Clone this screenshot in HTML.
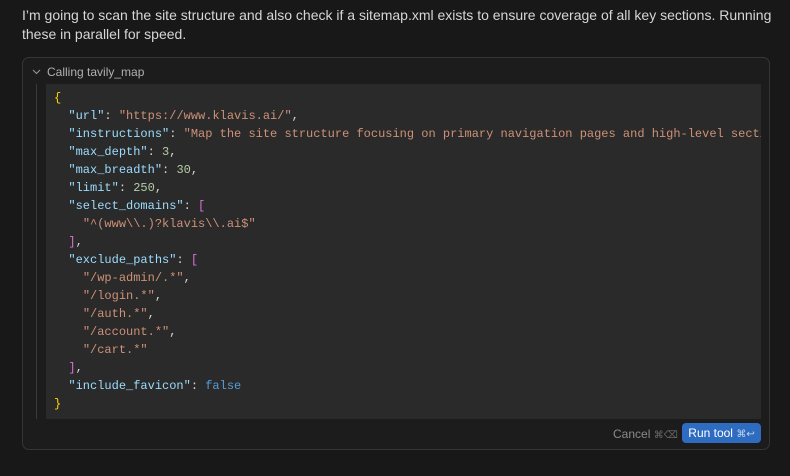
<!DOCTYPE html>
<html><head><style>
body{margin:0;background:#181818;width:790px;height:476px;overflow:hidden;font-family:"Liberation Sans",sans-serif;color:#d4d4d4}
.p{position:absolute;left:22px;top:6px;width:764px;font-size:14px;line-height:19px;color:#d6d6d6}
.box{position:absolute;left:22px;top:57px;width:746px;height:391px;border:1px solid #363636;border-radius:7px;background:#1c1c1c}
.hd{position:absolute;left:24px;top:7px;font-size:12px;color:#b0b0b0}
.chev{position:absolute;left:9px;top:11px}
.vl{position:absolute;left:13px;top:26px;width:1px;height:335px;background:#3a3a3a}
.code{position:absolute;left:23px;top:26px;width:715px;height:335px;background:#2a2a2a;overflow:hidden}
pre{margin:0;position:absolute;left:8px;top:5px;font-family:"Liberation Mono",monospace;font-size:12px;line-height:18px;color:#d4d4d4;white-space:pre}
.k{color:#9cdcfe}.s{color:#ce9178}.n{color:#b5cea8}.b{color:#ffd700}.v{color:#da70d6}.f{color:#569cd6}
.cancel{position:absolute;left:590px;top:369px;font-size:12px;color:#8a8a8a}
.run{position:absolute;left:659px;top:365px;width:79px;height:20px;border-radius:4px;background:#2d6cc0;color:#fff;font-size:12px;line-height:20px;text-align:center}
.kb{font-size:10px;opacity:.7}
</style></head><body>
<div class="p">I’m going to scan the site structure and also check if a sitemap.xml exists to ensure coverage of all key sections. Running<br>these in parallel for speed.</div>
<div class="box">
<svg class="chev" width="9" height="6" viewBox="0 0 9 6"><path d="M1 1l3.5 3.5L8 1" stroke="#999" fill="none" stroke-width="1"/></svg>
<div class="hd">Calling tavily_map</div>
<div class="vl"></div>
<div class="code"><pre><span class="b">{</span>
  <span class="k">"url"</span>: <span class="s">"https://www.klavis.ai/"</span>,
  <span class="k">"instructions"</span>: <span class="s">"Map the site structure focusing on primary navigation pages and high-level sections"</span>,
  <span class="k">"max_depth"</span>: <span class="n">3</span>,
  <span class="k">"max_breadth"</span>: <span class="n">30</span>,
  <span class="k">"limit"</span>: <span class="n">250</span>,
  <span class="k">"select_domains"</span>: <span class="v">[</span>
    <span class="s">"^(www\\.)?klavis\\.ai$"</span>
  <span class="v">]</span>,
  <span class="k">"exclude_paths"</span>: <span class="v">[</span>
    <span class="s">"/wp-admin/.*"</span>,
    <span class="s">"/login.*"</span>,
    <span class="s">"/auth.*"</span>,
    <span class="s">"/account.*"</span>,
    <span class="s">"/cart.*"</span>
  <span class="v">]</span>,
  <span class="k">"include_favicon"</span>: <span class="f">false</span>
<span class="b">}</span></pre></div>
<div class="cancel">Cancel <span class="kb">⌘⌫</span></div>
<div class="run">Run tool <span class="kb">⌘↩</span></div>
</div>
</body></html>
